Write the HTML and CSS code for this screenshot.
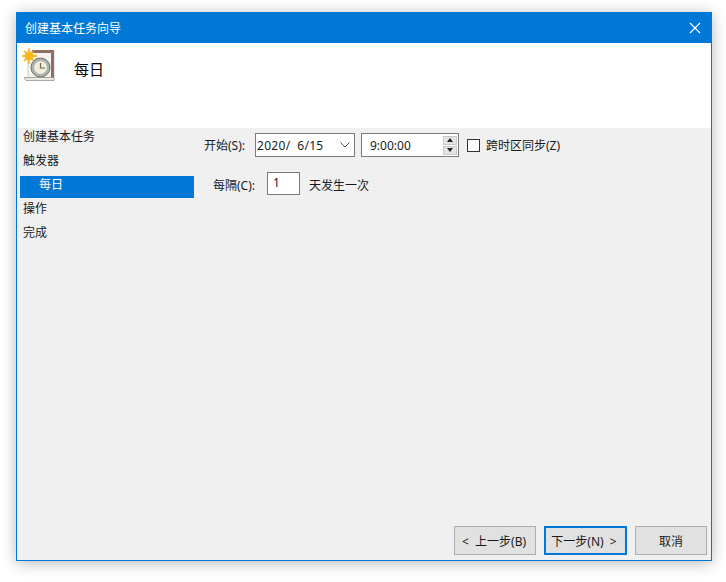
FILE: index.html
```html
<!DOCTYPE html>
<html lang="zh-CN">

<head>
    <meta charset="UTF-8">
    <title>创建基本任务向导</title>
    <link rel="stylesheet" href="styles.css">
</head>

<body>
    <div class="window">
        <div class="titlebar">
            <span>创建基本任务向导</span>
            <svg class="close-icon" width="12" height="12" viewBox="0 0 12 12">
                <path d="M1 1L11 11M11 1L1 11" stroke="#fff" stroke-width="1.2" fill="none" />
            </svg>
        </div>

        <div class="header">
            <svg class="task-icon" width="34" height="34" viewBox="0 0 34 34">
                <path d="M6 3H32V31H6Z" fill="#f6f3ec" stroke="#b8b2a8" stroke-width="0.6" />
                <path d="M10 2H32V30H29V5H10Z" fill="#8e6f63" />
                <path d="M2 29.5H32V32.5H4Z" fill="#ebe8e1" stroke="#9a968e" stroke-width="0.8" />
                <circle cx="18.5" cy="19.5" r="9.5" fill="#aeb2b4" stroke="#6f6f6c" stroke-width="1" />
                <circle cx="18.5" cy="19.5" r="6.5" fill="#f3eed8" />
                <path d="M18.5 15V20H23" stroke="#6b675c" stroke-width="1.2" fill="none" />
                <g stroke="#f5a50f" stroke-width="1.3">
                    <path d="M7 0V16M0 8H15M2 3L12 13M12 3L2 13" />
                </g>
                <circle cx="7" cy="8" r="4.5" fill="#fbb917" />
            </svg>
            <h1>每日</h1>
        </div>

        <div class="content">
            <div class="steps">
                <div class="step">创建基本任务</div>
                <div class="step">触发器</div>
                <div class="step step-active">每日</div>
                <div class="step">操作</div>
                <div class="step">完成</div>
            </div>

            <div class="form">
                <div class="form-row">
                    <label class="form-label">开始(S):</label>
                    <div class="field date-field">
                        <span class="date-text">2020/&nbsp; 6/15</span>
                        <svg width="10" height="6" viewBox="0 0 10 6">
                            <path d="M0.5 0.5L5 5L9.5 0.5" stroke="#555" fill="none" />
                        </svg>
                    </div>
                    <div class="field time-field">
                        <span>9:00:00</span>
                        <div class="spinner">
                            <div class="spin-btn"><i class="arrow-up"></i></div>
                            <div class="spin-btn"><i class="arrow-down"></i></div>
                        </div>
                    </div>
                    <span class="checkbox"></span>
                    <span class="check-label">跨时区同步(Z)</span>
                </div>

                <div class="form-row second-row">
                    <label class="form-label">每隔(C):</label>
                    <div class="field days-field">1</div>
                    <span class="days-label">天发生一次</span>
                </div>
            </div>
        </div>

        <div class="footer">
            <button class="btn btn-back">&lt;&nbsp; 上一步(B)</button>
            <button class="btn btn-next">下一步(N)&nbsp; &gt;</button>
            <button class="btn btn-cancel">取消</button>
        </div>
    </div>
</body>

</html>
```

FILE: styles.css
```css
body,
html {
    margin: 0;
    padding: 0;
    height: 100%;
    overflow: hidden;
    background: #fff;
    font-family: "Noto Sans", "Noto Sans CJK SC", sans-serif;
    font-size: 12px;
    color: #1a1a1a;
}

body {
    padding: 12px 14px 0 16px;
    box-sizing: border-box;
}

.window {
    width: 696px;
    height: 549px;
    box-sizing: border-box;
    display: flex;
    flex-direction: column;
    border: 1px solid #0078d7;
    background: #f0f0f0;
    box-shadow: 0 2px 14px rgba(0, 0, 0, 0.28);
}

.titlebar {
    height: 30px;
    flex: none;
    display: flex;
    align-items: center;
    justify-content: space-between;
    padding: 0 10px 0 8px;
    background: #0078d7;
    color: #fff;
}

.header {
    height: 85px;
    flex: none;
    display: flex;
    background: #fff;
    padding: 5px 0 0 5px;
    box-sizing: border-box;
}

.header h1 {
    margin: 9px 0 0 18px;
    font-size: 15px;
    line-height: 24px;
    font-weight: normal;
    color: #000;
}

.content {
    flex: 1;
    display: flex;
}

.steps {
    width: 174px;
    margin-left: 3px;
    display: flex;
    flex-direction: column;
    gap: 2px;
}

.step {
    height: 22px;
    line-height: 18px;
    padding-left: 3px;
}

.step-active {
    background: #0078d7;
    color: #fff;
    padding-left: 19px;
}

.form {
    padding: 5px 0 0 10px;
}

.form-row {
    display: flex;
    align-items: center;
}

.form-label {
    width: 51px;
}

.second-row {
    margin-top: 15px;
    padding-left: 9px;
}

.second-row .form-label {
    width: 54px;
    padding-top: 2px;
}

.field {
    height: 24px;
    box-sizing: border-box;
    border: 1px solid #7a7a7a;
    background: #fff;
    display: flex;
    align-items: center;
}

.date-field {
    width: 100px;
    justify-content: space-between;
    padding: 0 4px 0 1px;
}

.date-text {
    letter-spacing: 0.3px;
}

.time-field {
    width: 98px;
    margin-left: 6px;
    justify-content: space-between;
    padding-left: 8px;
}

.spinner {
    width: 14px;
    height: 19px;
    margin-right: 1px;
    display: flex;
    flex-direction: column;
    gap: 1px;
}

.spin-btn {
    flex: 1;
    background: #e4e4e4;
    border: 1px solid #c8c8c8;
    box-sizing: border-box;
    display: flex;
    align-items: center;
    justify-content: center;
}

.arrow-up {
    border-left: 3px solid transparent;
    border-right: 3px solid transparent;
    border-bottom: 4px solid #222;
}

.arrow-down {
    border-left: 3px solid transparent;
    border-right: 3px solid transparent;
    border-top: 4px solid #222;
}

.checkbox {
    width: 13px;
    height: 13px;
    box-sizing: border-box;
    margin-left: 8px;
    border: 1px solid #333;
    background: #fff;
}

.check-label {
    margin-left: 6px;
}

.days-field {
    width: 33px;
    height: 23px;
    padding: 0 0 2px 5px;
}

.days-label {
    margin-left: 9px;
    padding-top: 2px;
}

.footer {
    flex: none;
    height: 34px;
    display: flex;
    padding-left: 437px;
    gap: 8px;
}

.btn {
    height: 29px;
    width: 82px;
    padding: 0;
    box-sizing: border-box;
    border: 1px solid #adadad;
    background: #e1e1e1;
    font: inherit;
    color: #1a1a1a;
}

.btn-back {
    padding-right: 2px;
}

.btn-next {
    width: 83px;
    border: 2px solid #0078d7;
    padding-right: 3px;
}

.btn-cancel {
    width: 72px;
}
```
